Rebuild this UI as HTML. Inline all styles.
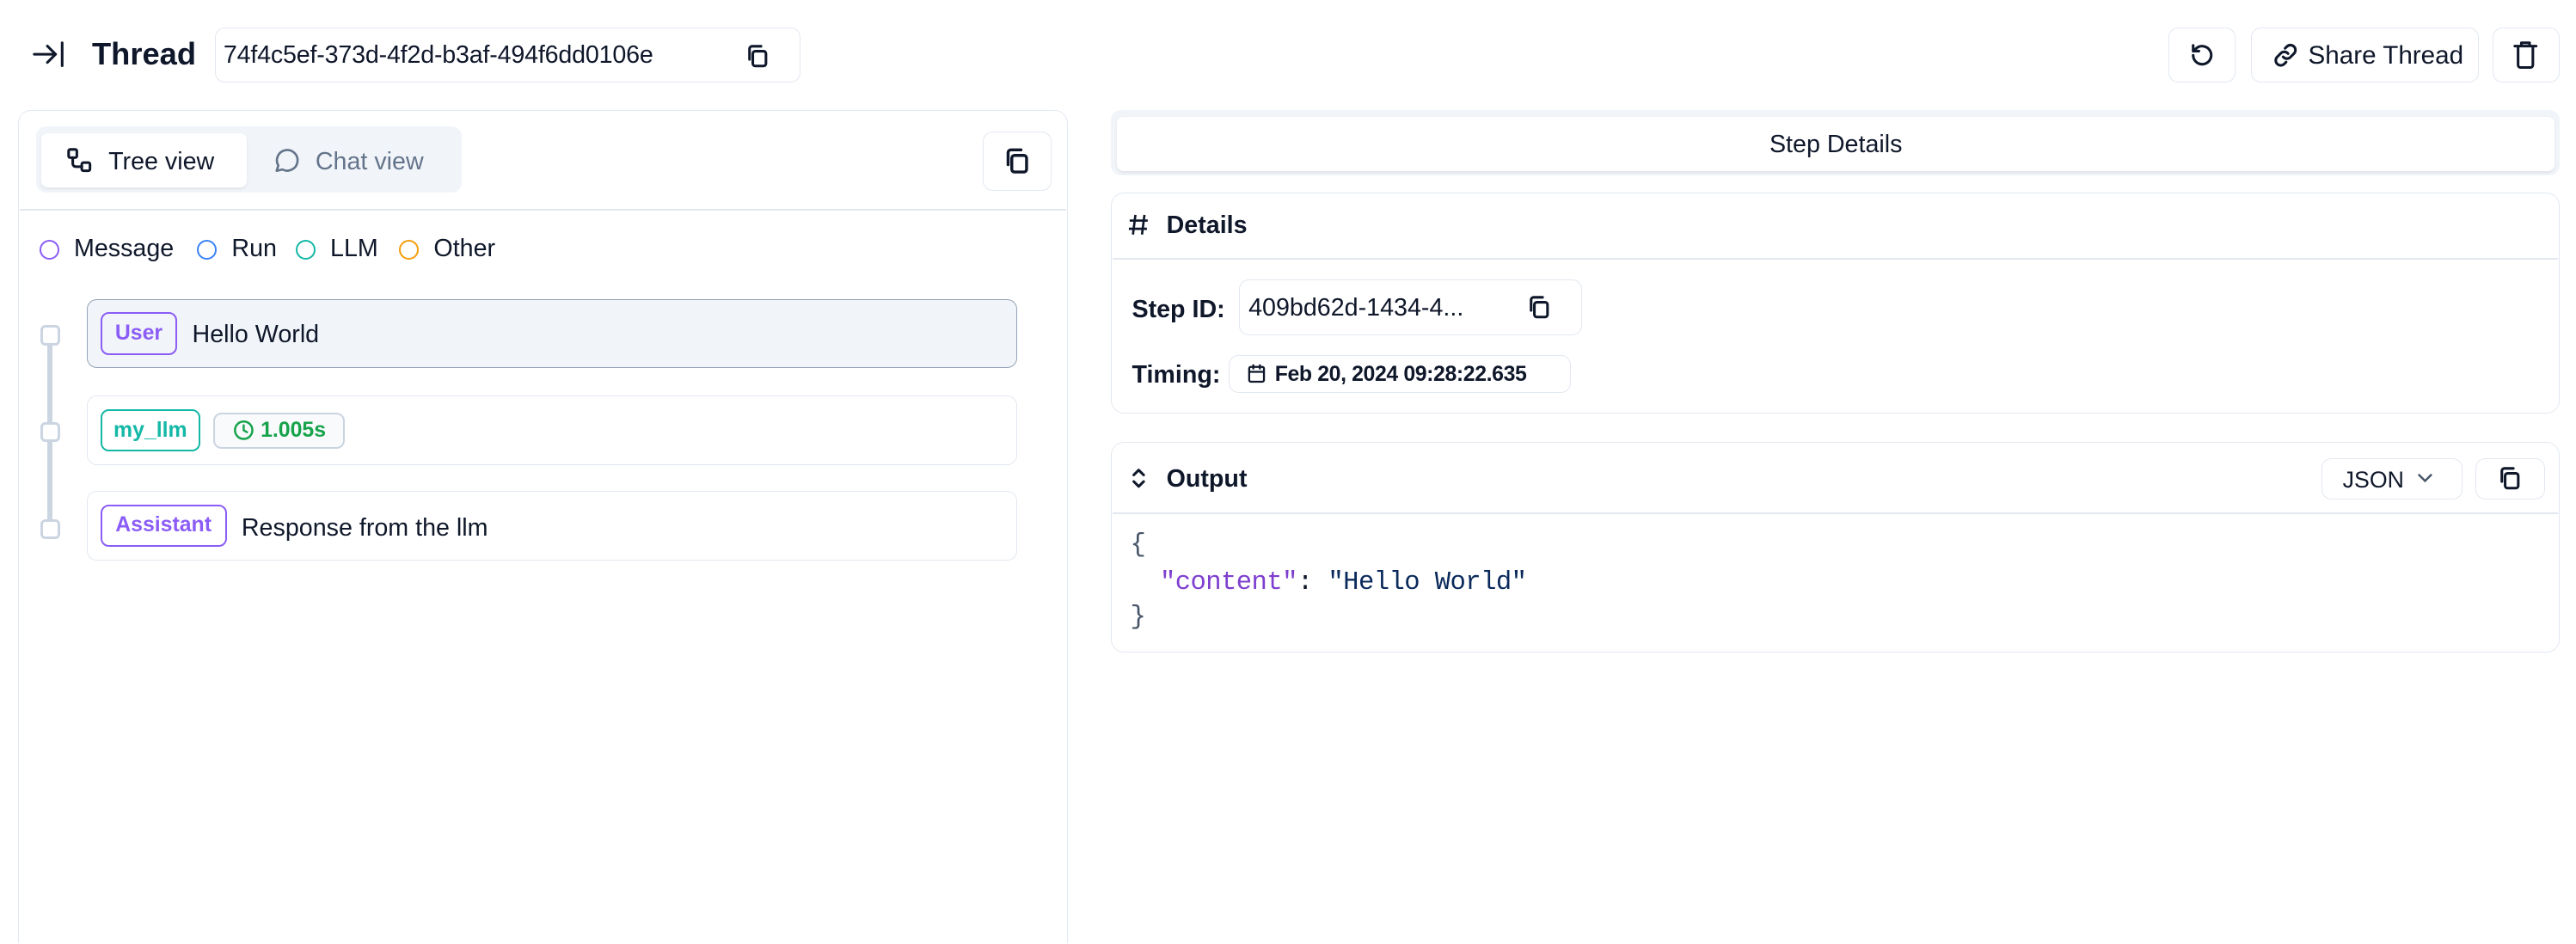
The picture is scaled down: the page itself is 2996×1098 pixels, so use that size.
<!DOCTYPE html>
<html><head><meta charset="utf-8"><style>
html,body{margin:0;padding:0;background:#fff;overflow:hidden}
body{width:2996px;height:1098px}
#r{zoom:1.9107;width:1568px;height:574px;overflow:hidden;position:relative;font-family:"Liberation Sans",sans-serif;color:#0f172a;font-size:15px}
.a{position:absolute}
.box{position:absolute;border:1px solid #e2e8f0;border-radius:6px;background:#fff;box-sizing:border-box}
svg{display:block}
.ic{fill:none;stroke:#0f172a;stroke-width:1.6;stroke-linecap:round;stroke-linejoin:round}
.tag{position:absolute;border:1.3px solid;border-radius:5px;font-weight:bold;font-size:13px;box-sizing:border-box;display:flex;align-items:center;justify-content:center}
.mono{font-family:"Liberation Mono",monospace;font-size:16px}
</style></head><body><div id="r">
<svg class="a" style="left:19px;top:23px" width="22" height="20" viewBox="0 0 22 20"><path class="ic" d="M2 10h13M10 5l5 5-5 5M19 3v14"/></svg>
<div class="a" style="left:56px;top:22px;font-size:19px;font-weight:bold">Thread</div>
<div class="box" style="left:131px;top:17px;width:356px;height:33px"></div>
<div class="a" style="left:136px;top:25px;font-size:15px;letter-spacing:-0.1px">74f4c5ef-373d-4f2d-b3af-494f6dd0106e</div>
<svg class="a" style="left:453px;top:26px" width="16" height="16" viewBox="0 0 16 16"><rect class="ic" x="5" y="5" width="8" height="9" rx="1.5" stroke-width="1.4"/><path class="ic" stroke-width="1.4" d="M3 10V3.5C3 2.7 3.7 2 4.5 2H10"/></svg>

<div class="box" style="left:1320px;top:17px;width:41px;height:33px"></div>
<svg class="a" style="left:1332px;top:25px" width="17" height="17" viewBox="0 0 17 17"><path class="ic" stroke-width="1.5" d="M3 8.5a5.5 5.5 0 1 0 1.8-4.1L3 6M3 2.5V6h3.5"/></svg>
<div class="box" style="left:1370px;top:17px;width:139px;height:33px"></div>
<svg class="a" style="left:1383px;top:25px" width="17" height="17" viewBox="0 0 17 17"><path class="ic" stroke-width="1.5" d="M7 9.5a3 3 0 0 0 4.3.3l2.3-2.3a3 3 0 0 0-4.3-4.3L8.2 4.3M10 7.5a3 3 0 0 0-4.3-.3L3.4 9.5a3 3 0 0 0 4.3 4.3l1.1-1.1"/></svg>
<div class="a" style="left:1405px;top:25px;font-size:15.5px">Share Thread</div>
<div class="box" style="left:1517px;top:17px;width:41px;height:33px"></div>
<svg class="a" style="left:1529px;top:24px" width="17" height="18" viewBox="0 0 17 18"><path class="ic" stroke-width="1.5" d="M2 4h13M6 4V2h5v2M4 4v11.5c0 .8.7 1.5 1.5 1.5h6c.8 0 1.5-.7 1.5-1.5V4"/></svg>

<div class="box" style="left:11px;top:67px;width:639px;height:540px;border-radius:8px"></div>
<div class="a" style="left:12px;top:127px;width:637px;height:1px;background:#e2e8f0"></div>
<div class="a" style="left:22px;top:77px;width:259px;height:40px;background:#f1f5f9;border-radius:6px"></div>
<div class="a" style="left:25px;top:81px;width:125px;height:33px;background:#fff;border-radius:4px;box-shadow:0 1px 2px rgba(0,0,0,.08)"></div>
<svg class="a" style="left:40px;top:89px" width="17" height="17" viewBox="0 0 17 17"><rect class="ic" stroke-width="1.3" x="2" y="2" width="5" height="5" rx="1"/><rect class="ic" stroke-width="1.3" x="10" y="10" width="5" height="5" rx="1"/><path class="ic" stroke-width="1.3" d="M4.5 7v3.5c0 .8.5 2 2 2H10"/></svg>
<div class="a" style="left:66px;top:90px;font-size:15px">Tree view</div>
<svg class="a" style="left:166px;top:89px" width="17" height="17" viewBox="0 0 17 17"><path fill="none" stroke="#64748b" stroke-width="1.4" stroke-linejoin="round" d="M2.5 15l1-3.2A6.3 6.3 0 1 1 6 14.2z"/></svg>
<div class="a" style="left:192px;top:90px;font-size:15px;color:#64748b">Chat view</div>
<div class="box" style="left:598px;top:80px;width:42px;height:36px"></div>
<svg class="a" style="left:610px;top:89px" width="18" height="18" viewBox="0 0 16 16"><rect class="ic" x="5" y="5" width="8" height="9" rx="1.5" stroke-width="1.4"/><path class="ic" stroke-width="1.4" d="M3 10V3.5C3 2.7 3.7 2 4.5 2H10"/></svg>

<div class="a" style="left:24px;top:146px;width:10px;height:10px;border:1.3px solid #8b5cf6;border-radius:50%"></div>
<div class="a" style="left:45px;top:143px">Message</div>
<div class="a" style="left:120px;top:146px;width:10px;height:10px;border:1.3px solid #3b82f6;border-radius:50%"></div>
<div class="a" style="left:141px;top:143px">Run</div>
<div class="a" style="left:180px;top:146px;width:10px;height:10px;border:1.3px solid #14b8a6;border-radius:50%"></div>
<div class="a" style="left:201px;top:143px">LLM</div>
<div class="a" style="left:243px;top:146px;width:10px;height:10px;border:1.3px solid #f59e0b;border-radius:50%"></div>
<div class="a" style="left:264px;top:143px">Other</div>

<div class="a" style="left:29px;top:208px;width:3px;height:112px;background:#cbd5e1"></div>
<div class="a" style="left:24.5px;top:198px;width:9px;height:9px;border:2px solid #cbd5e1;border-radius:3px;background:#fff"></div>
<div class="a" style="left:24.5px;top:257px;width:9px;height:9px;border:2px solid #cbd5e1;border-radius:3px;background:#fff"></div>
<div class="a" style="left:24.5px;top:316px;width:9px;height:9px;border:2px solid #cbd5e1;border-radius:3px;background:#fff"></div>

<div class="box" style="left:53px;top:182px;width:566px;height:42px;background:#f1f5f9;border-color:#94a3b8"></div>
<div class="tag" style="left:61px;top:190px;width:47px;height:26px;color:#8b5cf6;border-color:#8b5cf6">User</div>
<div class="a" style="left:117px;top:195px">Hello World</div>

<div class="box" style="left:53px;top:241px;width:566px;height:42px"></div>
<div class="tag" style="left:61px;top:249px;width:61px;height:26px;color:#14b8a6;border-color:#14b8a6">my_llm</div>
<div class="tag" style="left:130px;top:251px;width:80px;height:22px;color:#16a34a;border-color:#cbd5e1;background:#f8fafc;font-size:13px"><svg width="13" height="13" viewBox="0 0 13 13" style="margin-right:4px"><circle cx="6.5" cy="6.5" r="5.3" fill="none" stroke="#16a34a" stroke-width="1.3"/><path d="M6.5 3.5v3l2 1.2" fill="none" stroke="#16a34a" stroke-width="1.3" stroke-linecap="round"/></svg>1.005s</div>

<div class="box" style="left:53px;top:299px;width:566px;height:42px"></div>
<div class="tag" style="left:61px;top:307px;width:77px;height:26px;color:#8b5cf6;border-color:#8b5cf6">Assistant</div>
<div class="a" style="left:147px;top:313px">Response from the llm</div>

<div class="a" style="left:676px;top:67px;width:882px;height:40px;background:#f1f5f9;border-radius:6px"></div>
<div class="a" style="left:680px;top:71px;width:875px;height:33px;background:#fff;border-radius:4px;box-shadow:0 1px 2px rgba(0,0,0,.08);text-align:center;line-height:34px;font-size:15px">Step Details</div>

<div class="box" style="left:676px;top:117px;width:882px;height:135px;border-radius:8px"></div>
<div class="a" style="left:677px;top:157px;width:880px;height:1px;background:#e2e8f0"></div>
<svg class="a" style="left:686px;top:130px" width="14" height="14" viewBox="0 0 14 14"><path d="M5 1L3.5 13M10.5 1L9 13M1.5 4.5h11M1 9.5h11" stroke="#0f172a" stroke-width="1.4" fill="none"/></svg>
<div class="a" style="left:710px;top:129px;font-weight:bold;font-size:15px">Details</div>
<div class="a" style="left:689px;top:180px;font-weight:bold;font-size:15px">Step ID:</div>
<div class="box" style="left:754px;top:170px;width:209px;height:34px"></div>
<div class="a" style="left:760px;top:179px;font-size:15px">409bd62d-1434-4...</div>
<svg class="a" style="left:929px;top:179px" width="16" height="16" viewBox="0 0 16 16"><rect class="ic" x="5" y="5" width="8" height="9" rx="1.5" stroke-width="1.4"/><path class="ic" stroke-width="1.4" d="M3 10V3.5C3 2.7 3.7 2 4.5 2H10"/></svg>
<div class="a" style="left:689px;top:220px;font-weight:bold;font-size:15px">Timing:</div>
<div class="box" style="left:748px;top:216px;width:208px;height:23px"></div>
<svg class="a" style="left:759px;top:221px" width="12" height="13" viewBox="0 0 12 13"><rect x="1.5" y="2.5" width="9" height="9" rx="1" fill="none" stroke="#0f172a" stroke-width="1.2"/><path d="M1.5 5.5h9M4 1v3M8 1v3" stroke="#0f172a" stroke-width="1.2"/></svg>
<div class="a" style="left:776px;top:221px;font-weight:bold;font-size:13px;letter-spacing:-0.2px">Feb 20, 2024 09:28:22.635</div>

<div class="box" style="left:676px;top:269px;width:882px;height:128px;border-radius:8px"></div>
<div class="a" style="left:677px;top:312px;width:880px;height:1px;background:#e2e8f0"></div>
<svg class="a" style="left:686px;top:283px" width="14" height="16" viewBox="0 0 14 16"><path class="ic" stroke-width="1.4" d="M4 6l3-3 3 3M4 10l3 3 3-3"/></svg>
<div class="a" style="left:710px;top:283px;font-weight:bold;font-size:15px">Output</div>
<div class="box" style="left:1413px;top:279px;width:86px;height:25px"></div>
<div class="a" style="left:1426px;top:284px;font-size:14px">JSON</div>
<svg class="a" style="left:1470px;top:286px" width="12" height="10" viewBox="0 0 12 10"><path d="M2 3l4 4 4-4" fill="none" stroke="#475569" stroke-width="1.3"/></svg>
<div class="box" style="left:1507px;top:279px;width:42px;height:25px"></div>
<svg class="a" style="left:1520px;top:283px" width="16" height="16" viewBox="0 0 16 16"><rect class="ic" x="5" y="5" width="8" height="9" rx="1.5" stroke-width="1.4"/><path class="ic" stroke-width="1.4" d="M3 10V3.5C3 2.7 3.7 2 4.5 2H10"/></svg>
<div class="a mono" style="left:688px;top:323px;color:#475569">{</div>
<div class="a mono" style="left:706px;top:346px;letter-spacing:-0.3px"><span style="color:#7e3fcf">"content"</span><span style="color:#0f172a">: </span><span style="color:#0b2a5c">"Hello World"</span></div>
<div class="a mono" style="left:688px;top:367px;color:#475569">}</div>
</div></body></html>
